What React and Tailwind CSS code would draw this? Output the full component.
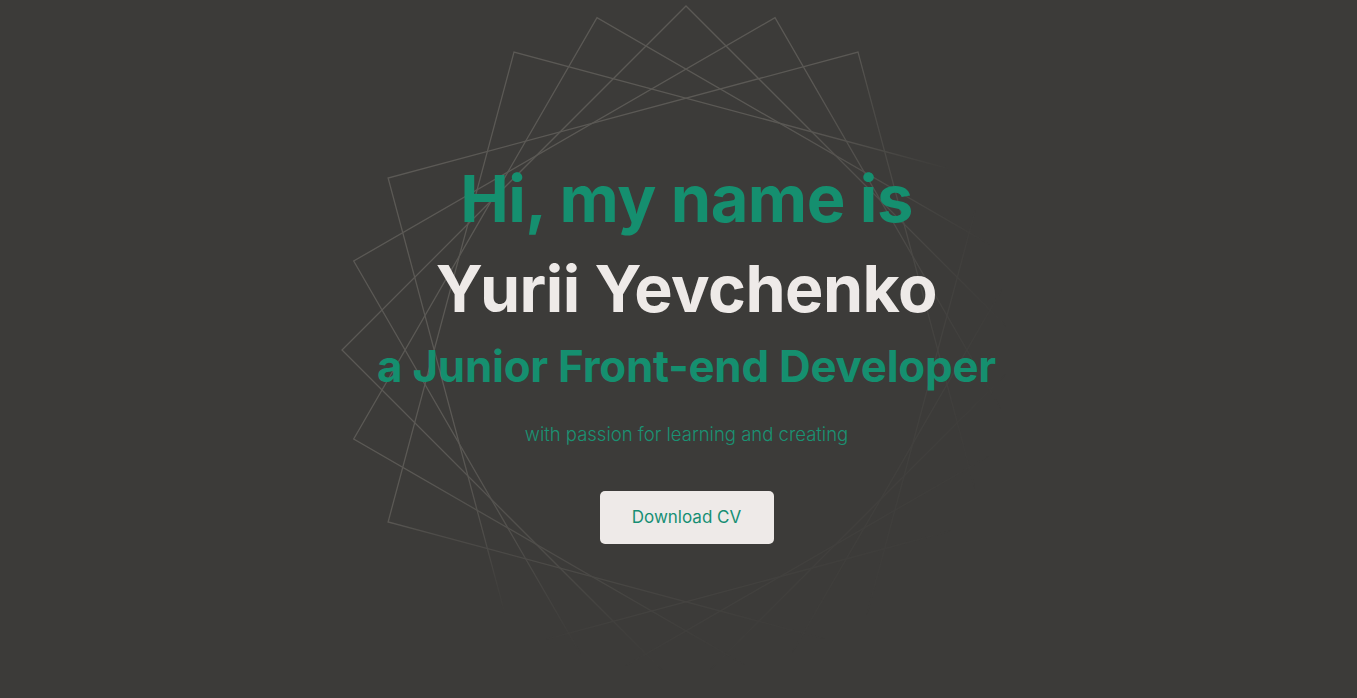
import React from 'react';

const CX = 686;
const CY = 350;
const R = 344;

const squarePoints = (deg) => {
  const pts = [];
  for (let k = 0; k < 4; k++) {
    const a = ((deg + k * 90) * Math.PI) / 180;
    pts.push(`${(CX + R * Math.cos(a)).toFixed(1)},${(CY + R * Math.sin(a)).toFixed(1)}`);
  }
  return pts.join(' ');
};

// rotated squares; lit at the upper left, fading toward the lower right
const Squares = () => (
  <svg className="absolute inset-0 w-full h-full pointer-events-none" viewBox="0 0 1357 698" preserveAspectRatio="xMidYMid slice">
    <defs>
      <linearGradient id="lin" gradientUnits="userSpaceOnUse" x1="622" y1="286" x2="704" y2="368">
        <stop offset="0" stopColor="#fff" stopOpacity="1" />
        <stop offset="1" stopColor="#fff" stopOpacity="0" />
      </linearGradient>
      <radialGradient id="rad" gradientUnits="userSpaceOnUse" cx={CX} cy={CY} r="322">
        <stop offset="0.78" stopColor="#fff" stopOpacity="1" />
        <stop offset="1" stopColor="#fff" stopOpacity="0" />
      </radialGradient>
      <linearGradient id="soft" gradientUnits="userSpaceOnUse" x1="615" y1="279" x2="863" y2="527">
        <stop offset="0" stopColor="#fff" stopOpacity="1" />
        <stop offset="0.7" stopColor="#fff" stopOpacity="0.32" />
        <stop offset="1" stopColor="#fff" stopOpacity="0.15" />
      </linearGradient>
      <mask id="cutMask" maskUnits="userSpaceOnUse" x="0" y="0" width="1357" height="698">
        <rect x="0" y="0" width="1357" height="698" fill="url(#lin)" />
        <circle cx={CX} cy={CY} r="322" fill="url(#rad)" />
      </mask>
      <mask id="softMask" maskUnits="userSpaceOnUse" x="0" y="0" width="1357" height="698">
        <rect x="0" y="0" width="1357" height="698" fill="url(#soft)" />
      </mask>
    </defs>
    <g mask="url(#softMask)">
      <g mask="url(#cutMask)">
        {[0, 15, 30, 60, 75].map((d) => (
          <polygon key={d} points={squarePoints(d)} fill="none" stroke="#5b5955" strokeWidth="1.3" />
        ))}
      </g>
    </g>
  </svg>
);

export default function App() {
  return (
    <div className="relative w-full h-screen overflow-hidden bg-[#3c3b39] font-['Inter',sans-serif]">
      <Squares />

      <main className="relative flex flex-col items-center pl-4 pt-[166px] text-center">
        <h1 className="text-[65px] leading-none font-bold text-[#158f6f] tracking-[-0.5px]">
          Hi, my name is
        </h1>
        <h2 className="mt-[26px] text-[64.5px] leading-none font-bold text-[#eeeae8] tracking-[-0.5px]">
          Yurii Yevchenko
        </h2>
        <h3 className="mt-[23px] text-[43.8px] leading-none font-bold text-[#158f6f] tracking-[-0.2px]">
          a Junior Front-end Developer
        </h3>
        <p className="mt-[37px] text-[18.5px] leading-none font-light text-[#1a9273]">
          with passion for learning and creating
        </p>
        <button className="mt-[47px] w-[174px] h-[53px] rounded-[5px] bg-[#eeeae8] text-[#168f74] text-[17px] font-normal flex items-center justify-center">
          Download CV
        </button>
      </main>
    </div>
  );
}
